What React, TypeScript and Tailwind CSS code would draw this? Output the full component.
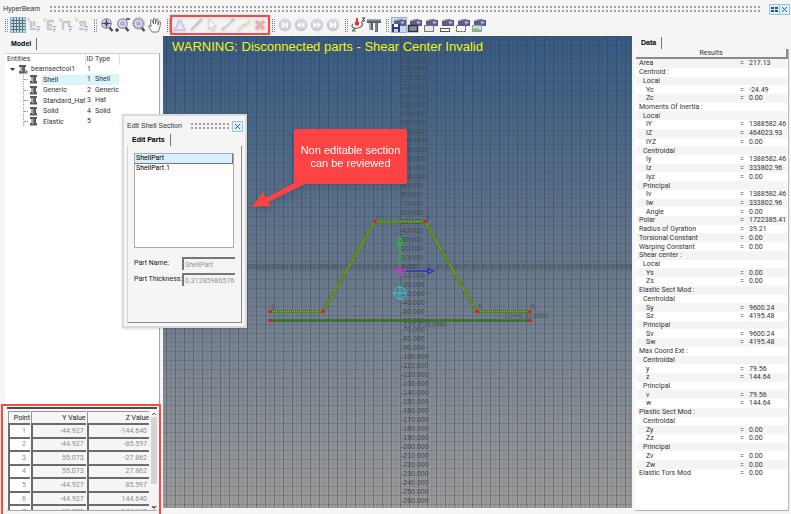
import React from "react";

const UI = "font-['Roboto','Liberation_Sans',Arial,sans-serif]";

const entities = [
  { name: "Shell", id: 1, type: "Shell", selected: true },
  { name: "Generic", id: 2, type: "Generic" },
  { name: "Standard_Hat", id: 3, type: "Hat" },
  { name: "Solid", id: 4, type: "Solid" },
  { name: "Elastic", id: 5, type: "" },
];

const points = [
  ["1", "-44.927", "-144.640"],
  ["2", "-44.927", "-85.597"],
  ["3", "55.073", "-27.862"],
  ["4", "55.073", "27.862"],
  ["5", "-44.927", "85.597"],
  ["6", "-44.927", "144.640"],
  ["7", "-55.073", "-144.640"],
];

type Result = [level: 0 | 1 | 2, label: string, value?: string];

const results: Result[] = [
  [0, "Area", "217.13"],
  [0, "Centroid :"],
  [1, "Local"],
  [2, "Yc", "-24.49"],
  [2, "Zc", "0.00"],
  [0, "Moments Of Inertia :"],
  [1, "Local"],
  [2, "IY", "1388582.46"],
  [2, "IZ", "464023.93"],
  [2, "IYZ", "0.00"],
  [1, "Centroidal"],
  [2, "Iy", "1388582.46"],
  [2, "Iz", "333802.96"],
  [2, "Iyz", "0.00"],
  [1, "Principal"],
  [2, "Iv", "1388582.46"],
  [2, "Iw", "333802.96"],
  [2, "Angle", "0.00"],
  [0, "Polar", "1722385.41"],
  [0, "Radius of Gyration", "39.21"],
  [0, "Torsional Constant", "0.00"],
  [0, "Warping Constant", "0.00"],
  [0, "Shear center :"],
  [1, "Local"],
  [2, "Ys", "0.00"],
  [2, "Zs", "0.00"],
  [0, "Elastic Sect Mod :"],
  [1, "Centroidal"],
  [2, "Sy", "9600.24"],
  [2, "Sz", "4195.48"],
  [1, "Principal"],
  [2, "Sv", "9600.24"],
  [2, "Sw", "4195.48"],
  [0, "Max Coord Ext :"],
  [1, "Centroidal"],
  [2, "y", "79.56"],
  [2, "z", "144.64"],
  [1, "Principal"],
  [2, "v", "79.56"],
  [2, "w", "144.64"],
  [0, "Plastic Sect Mod :"],
  [1, "Centroidal"],
  [2, "Zy", "0.00"],
  [2, "Zz", "0.00"],
  [1, "Principal"],
  [2, "Zv", "0.00"],
  [2, "Zw", "0.00"],
  [0, "Elastic Tors Mod", "0.00"],
];

const indent = ["pl-[3px]", "pl-[7px]", "pl-[10px]"];

function Dots({ className }: { className: string }) {
  return (
    <div
      className={`h-2 bg-[radial-gradient(circle_at_center,#a0a0a0_0,#a0a0a0_1px,transparent_1px)] bg-[length:4px_4px] ${className}`}
    />
  );
}

function Handle() {
  return (
    <svg className="h-[15px] w-[9px] shrink-0" viewBox="0 0 9 15" aria-hidden="true">
      {[1, 3, 5, 7, 9, 11, 13].map((y) => (
        <g key={y}>
          <rect x="4" y={y} width="1" height="1" fill="#6b6b6b" />
          <rect x="6" y={y} width="1" height="1" fill="#8d8d8d" />
        </g>
      ))}
    </svg>
  );
}

function Tool({ label, active, children }: { label: string; active?: boolean; children: React.ReactNode }) {
  return (
    <button
      type="button"
      aria-label={label}
      className={`flex size-4 shrink-0 items-center justify-center ${active ? "bg-[#c3dcec] outline-1 -outline-offset-1 outline-[#8fb2c8]" : ""}`}
    >
      <svg className="size-4" viewBox="0 0 16 16" fill="none">
        {children}
      </svg>
    </button>
  );
}

function AxisGlyph({ d }: { d: string }) {
  return (
    <g opacity="0.85">
      <path d="M1 1l1.500 2L4 1M2.500 3v2" stroke="#b9b9b9" />
      <path d={d} stroke="#c2c2c2" strokeWidth="2.500" />
      <path d="M10 9.500h4l-3 3h3M12 13v2" stroke="#a6aec8" />
    </g>
  );
}

function Magnifier({ children }: { children?: React.ReactNode }) {
  return (
    <>
      <path d="M10.5 10.5l3 3.5" stroke="#4c4c4c" strokeWidth="2.4" />
      <circle cx="7.5" cy="6.5" r="4.700" fill="#dfe1f0" stroke="#8a8a94" strokeWidth="1.3" />
      <circle cx="7.5" cy="6.5" r="2.5" fill="#a9afe0" />
      {children}
    </>
  );
}

function Player({ d }: { d: string }) {
  return (
    <>
      <circle cx="8" cy="8" r="6.300" fill="#cbccd8" />
      <circle cx="8" cy="7" r="4.800" fill="#d6d7e2" />
      <path d={d} fill="#ffffff" />
    </>
  );
}

function Camera({ children }: { children: React.ReactNode }) {
  return (
    <>
      <path d="M3 3.5h3V2h5v1h4v6H3z" fill="#5c5d84" />
      <path d="M3 3.5h3V2h4v1.5z" fill="#9a9cc0" />
      <circle cx="11.5" cy="5.5" r="2.6" fill="#8588c4" stroke="#454670" strokeWidth="0.7" />
      <circle cx="11.5" cy="5.5" r="0.8" fill="#dcdcf5" />
      {children}
    </>
  );
}

function Toolbar() {
  return (
    <div role="toolbar" className="flex h-[20px] items-center pb-[2px] pl-[1px]">
      <Handle />
      <Tool label="Grid" active>
        <path d="M3.5 1v14M6.5 1v14M9.5 1v14M12.5 1v14M1 3.5h14M1 6.5h14M1 9.5h14M1 12.5h14" stroke="#53727d" />
      </Tool>
      <Tool label="Local axis"><AxisGlyph d="M5 4v8h5M8 9V4" /></Tool>
      <Tool label="Flip axis"><AxisGlyph d="M12 4H6v8h4M6 8h4" /></Tool>
      <Tool label="Move axis"><AxisGlyph d="M5 13V5h6v4" /></Tool>
      <Tool label="Swap axis"><AxisGlyph d="M5 5h6v4M5 12h5M6 8h3" /></Tool>
      <Handle />
      <Tool label="Fit view">
        <Magnifier>
          <path d="M7.5 2.5v8M3.5 6.5h8" stroke="#3b3c66" strokeWidth="1.2" />
          <path d="M5.5 4.5l4 4m0-4l-4 4" stroke="#5b5d91" strokeWidth="0.6" />
        </Magnifier>
      </Tool>
      <Tool label="Zoom">
        <Magnifier>
          <path d="M11 2h4" stroke="#333" strokeWidth="1.4" />
          <path d="M0 13h4M2 11v4" stroke="#222" strokeWidth="1.2" />
        </Magnifier>
      </Tool>
      <Tool label="Zoom window">
        <Magnifier><circle cx="7.5" cy="6.5" r="6" stroke="#a5a5b0" strokeDasharray="2 1" /></Magnifier>
      </Tool>
      <Tool label="Pan">
        <path d="M5 15c-1-2-3-4-3.5-6 .5-1.200 2-.2 2.500 1L3.500 3.500c.3-1 1.500-1 1.800 0L6.500 7V2c.2-1.100 1.600-1.100 1.900 0V7l1-4.500c.4-.9 1.600-.7 1.700.2L10.800 8l1.300-3c.5-.8 1.500-.4 1.500.5-.5 3-1 6.500-2.600 9.500z" fill="#fdfdfd" stroke="#666" strokeWidth="0.9" />
      </Tool>
      <Handle />
      <div className="flex outline-2 outline-[#f04c4c] drop-shadow">
        <Tool label="Section"><path d="M7 3L3 13L13 13L8 3" stroke="#c4c4ea" strokeWidth="1.600" /><circle cx="3" cy="13" r="1" fill="#ecaebb" /></Tool>
        <Tool label="Line"><path d="M3 13L13 3" stroke="#c3c3d6" strokeWidth="1.800" /><path d="M4 12l8-8" stroke="#efacac" strokeWidth="0.800" /><circle cx="13" cy="3" r="1.200" fill="#e8b4b4" /></Tool>
        <Tool label="Select"><path d="M5 2v10l2.500-2 1.500 4 2-1-1.800-3.500H12z" fill="#fafafa" stroke="#cccccc" /></Tool>
        <Tool label="Join"><path d="M3 12l4-3 2-2 4-4" stroke="#c8c8d0" strokeWidth="1.600" /><circle cx="3" cy="12" r="1.600" fill="#c8c8e2" /><circle cx="13" cy="3" r="1.600" fill="#bdbdda" /></Tool>
        <Tool label="Split"><path d="M3 12l4-4h3l4-4" stroke="#dadacb" strokeWidth="1.600" /><circle cx="3" cy="12" r="1.600" fill="#e7e396" /><circle cx="8" cy="8" r="1.200" fill="#dcd9b0" /><circle cx="13" cy="5" r="1.500" fill="#e7e396" /></Tool>
        <Tool label="Delete"><path d="M4 4l8 8m0-8l-8 8" stroke="#e9adad" strokeWidth="3.600" /></Tool>
      </div>
      <Handle />
      <Tool label="First"><Player d="M5 5h1.500v6H5zM11 5v6L6.500 8z" /></Tool>
      <Tool label="Previous"><Player d="M7.500 5v6L4 8zM11.500 5v6L8 8z" /></Tool>
      <Tool label="Next"><Player d="M4.500 5v6L8 8zM8.500 5v6L12 8z" /></Tool>
      <Tool label="Last"><Player d="M5 5v6l4.500-3zM9.500 5H11v6H9.500z" /></Tool>
      <Handle />
      <Tool label="Orient">
        <path d="M3 7c-3 3 1 5 5 4s6-4 3-6M2 14l4-3M2 14h4" stroke="#6a6a6a" strokeWidth="1.200" />
        <path d="M7 1v6" stroke="#d33" strokeWidth="2" />
        <circle cx="7" cy="6.500" r="2.300" fill="#e23232" />
        <path d="M12 1h3l-3 3h3" stroke="#333" />
      </Tool>
      <Tool label="Sections">
        <path d="M1 2h14v4h-3v9H9V6H7v7H3.500V6H1z" fill="#5c6270" />
        <path d="M1 2h14v1.500H1zM4 6h1v7H4zM9.500 6h1v8h-1z" fill="#a5abb8" />
      </Tool>
      <Handle />
      <Tool label="Save image" active><Camera><rect x="1" y="7" width="8" height="8" fill="#353a70" /><rect x="3" y="7" width="4" height="3" fill="#fff" /><rect x="3" y="12" width="4" height="3" fill="#c9cde8" /></Camera></Tool>
      <Tool label="Capture window"><Camera><rect x="1.500" y="8.500" width="9" height="6" fill="#7e8ea3" stroke="#343434" strokeWidth="1.500" /></Camera></Tool>
      <Tool label="Capture panel"><Camera><rect x="1.500" y="8.500" width="9" height="6" fill="#e6e6e6" stroke="#777" /></Camera></Tool>
      <Tool label="Capture strip"><Camera><rect x="1.500" y="11.500" width="9" height="3" fill="#fff" stroke="#555" /></Camera></Tool>
      <Tool label="Capture area"><Camera><rect x="1.500" y="8.500" width="9" height="6" fill="#fff" stroke="#444" strokeDasharray="2 1" /></Camera></Tool>
      <Tool label="Capture picture"><Camera><rect x="1.500" y="8.500" width="9" height="6" fill="#bfe0ef" stroke="#8aa" /><path d="M2 14v-2l3-1 5 2v1z" fill="#9cc050" /></Camera></Tool>
    </div>
  );
}

function SectionIcon({ assembly }: { assembly?: boolean }) {
  return (
    <svg className="h-[9px] w-[10px] shrink-0" viewBox="0 0 10 9" aria-hidden="true">
      <path d="M1 0h7v2H7v4h1v2.500H1V6h1.500V2H1z" fill="#5a5a5a" />
      <path d="M3 2h1.500v5H3z" fill="#a5a5a5" />
      {assembly && <circle cx="8.200" cy="7" r="1.800" fill="#8b8b8b" />}
    </svg>
  );
}

function Tab({ children }: { children: React.ReactNode }) {
  return (
    <button
      type="button"
      role="tab"
      aria-selected="true"
      className="h-3 self-start border-r border-[#777] px-[5px] text-[7px] leading-[12px] font-bold text-black font-['Liberation_Sans',Arial,sans-serif]"
    >
      {children}
    </button>
  );
}

function EntityTree() {
  return (
    <div className="ml-[5px] mr-[3px] flex-1 border-t border-r border-t-[#cfcfcf] border-r-[#a5a5a5] bg-white">
      <table className={`h-[73px] w-full table-fixed border-collapse text-[7px] leading-[9px] text-[#333] ${UI}`}>
        <colgroup>
          <col className="w-[80px]" />
          <col className="w-[10px]" />
          <col className="w-[24px]" />
          <col />
        </colgroup>
        <thead>
          <tr className="h-[11px] text-left">
            <th className="border-r border-[#dcdcdc] p-0 pl-[2px] font-normal">Entities</th>
            <th className="p-0 pl-px font-normal">ID</th>
            <th className="border-r border-[#dcdcdc] p-0 font-normal">Type</th>
            <th className="p-0" />
          </tr>
        </thead>
        <tbody>
          <tr>
            <td className="p-0">
              <div className="flex items-center gap-[3px] pl-[5px]">
                <svg className="h-[3px] w-[5px]" viewBox="0 0 5 3" aria-hidden="true"><path d="M0 0h5L2.500 3z" fill="#333" /></svg>
                <SectionIcon assembly />
                beamsectcol1
              </div>
            </td>
            <td className="p-0 pl-[2px]">1</td>
            <td className="p-0" />
            <td className="p-0" />
          </tr>
          {entities.map((e) => (
            <tr key={e.name}>
              <td className="p-0">
                <div className="flex items-center pl-[18px]">
                  <span className="h-[9px] w-[5px] shrink-0 border-l border-dotted border-[#999]">
                    <span className="block h-[5px] border-b border-dotted border-[#999]" />
                  </span>
                  <span className="ml-px flex shrink-0">
                    <SectionIcon />
                  </span>
                  <span className={`ml-[2px] flex-1 pl-[2px] leading-[10px] whitespace-nowrap ${e.selected ? "bg-[#dcf4fc]" : ""}`}>{e.name}</span>
                </div>
              </td>
              <td className={`p-0 pl-[2px] ${e.selected ? "bg-[#dcf4fc]" : ""}`}>{e.id}</td>
              <td className={`p-0 ${e.selected ? "bg-[#dcf4fc]" : ""}`}>{e.type}</td>
              <td className="p-0" />
            </tr>
          ))}
        </tbody>
      </table>
    </div>
  );
}

function PointTable() {
  const cell = "border-t-2 border-l-2 border-[#6c6c6c] p-0";
  return (
    <div className="mr-[2px] ml-px flex h-[110px] flex-col border-2 border-b-0 border-[#f34a4a] pt-px pr-[2px] pl-[4px] shadow">
      <div className="h-[2px] shrink-0 bg-[#4e4e4e]" />
      <div className="flex h-[102px] overflow-hidden border-b border-[#aaa] pt-[2px]">
        <table className={`h-[107px] flex-1 table-fixed border-separate border-spacing-x-[1px] border-spacing-y-0 text-right text-[7px] leading-[10px] ${UI}`}>
          <colgroup>
            <col className="w-[22px]" />
            <col />
            <col />
          </colgroup>
          <thead>
            <tr className="h-[12px] text-[#222]">
              {["Point", "Y Value", "Z Value"].map((h) => (
                <th key={h} className="border-t border-l border-[#9a9a9a] p-0 font-normal">{h}</th>
              ))}
            </tr>
          </thead>
          <tbody className="text-[#8d8d8d]">
            {points.map(([n, y, z]) => (
              <tr key={n}>
                <td className={`${cell} bg-white pr-[4px]`}>{n}</td>
                <td className={`${cell} pr-[2px]`}>{y}</td>
                <td className={`${cell} pr-[2px]`}>{z}</td>
              </tr>
            ))}
          </tbody>
        </table>
        <div className="flex w-[7px] flex-col items-center justify-between text-[#555]">
          <svg className="h-[6px] w-[6px]" viewBox="0 0 6 6"><path d="M1 4l2-2 2 2" fill="none" stroke="currentColor" /></svg>
          <div className="mb-5 w-[6px] flex-1 bg-[#d4d4d4]" />
          <svg className="h-[6px] w-[6px]" viewBox="0 0 6 6"><path d="M1 2l2 2 2-2" fill="none" stroke="currentColor" strokeWidth="1.500" /></svg>
        </div>
      </div>
    </div>
  );
}

const steps = Array.from({ length: 52 }, (_, i) => i - 26);

function Canvas() {
  return (
    <div className="relative mb-[6px] min-w-0 flex-1 bg-linear-to-b from-[#365b84] via-[#68798d] to-[#9b9b9b]">
      <svg className="absolute inset-0 size-full" viewBox="163 36 469 472" preserveAspectRatio="xMidYMid slice">
        <defs>
          <pattern id="fine" x="400" y="270" width="4.5" height="4.5" patternUnits="userSpaceOnUse">
            <path d="M0.500 0v4.500" stroke="#303030" strokeOpacity="0.12" />
            <path d="M0 0.500h4.500" stroke="#303030" strokeOpacity="0.05" />
          </pattern>
          <pattern id="coarse" x="400" y="270" width="9" height="9" patternUnits="userSpaceOnUse">
            <path d="M0.500 0v9" stroke="#303030" strokeOpacity="0.26" />
            <path d="M0 0.500h9" stroke="#303030" strokeOpacity="0.2" strokeDasharray="2 1" />
          </pattern>
        </defs>
        <rect x="163" y="36" width="469" height="472" fill="url(#fine)" />
        <rect x="163" y="36" width="469" height="472" fill="url(#coarse)" />
        <g fill="#42474c" fontFamily="Liberation Sans, Arial, sans-serif" fontSize="7">
          {steps.map((n) => (
            <text key={`v${n}`} x="401" y={269 - n * 9}>{(n * 10).toFixed(3)}</text>
          ))}
          {steps.map((n) => (
            <text key={`h${n}`} x={400 + n * 9} y="269" fillOpacity="0.5">{(n * 10).toFixed(3)}</text>
          ))}
          <text x="505" y="318" fillOpacity="0.8">L1= 0.312860</text>
          <text x="404" y="327" fillOpacity="0.8">L1= 0.312860</text>
          <text x="271" y="309" fillOpacity="0.7">1</text>
          <text x="324" y="309" fillOpacity="0.7">2</text>
          <text x="376" y="219" fillOpacity="0.7">3</text>
          <text x="426" y="219" fillOpacity="0.7">4</text>
          <text x="478" y="309" fillOpacity="0.7">5</text>
          <text x="531" y="309" fillOpacity="0.7">6</text>
        </g>
        <path d="M270 320.500H530" stroke="#3a7029" strokeWidth="2.500" />
        <path d="M270 311.500H323L375 221.500H425L477 311.500H530" fill="none" stroke="#4a7d22" strokeWidth="3" />
        <path d="M270 311.500H323L375 221.500H425L477 311.500H530" fill="none" stroke="#8fae2c" strokeWidth="1.500" strokeDasharray="1 1" />
        <g fill="#f01414">
          {[[270, 311], [323, 311], [375, 221], [425, 221], [477, 311], [530, 311], [270, 320], [530, 320]].map(([x, y]) => (
            <circle key={`${x}-${y}`} cx={x} cy={y + 0.5} r="1.700" />
          ))}
        </g>
        <g fill="none">
          <path d="M400 270V243M397.500 243h5l-2.500-5.500z" stroke="#1fc42d" strokeWidth="1.300" />
          <path d="M401 271H428M428 268.500v5l5.500-2.500z" stroke="#2a2fc4" strokeWidth="1.300" />
          <path d="M394 271h12M400 265v12" stroke="#dc22dc" strokeWidth="1.500" />
          <path d="M393 293h14M400 286v14" stroke="#22d3dc" />
          <circle cx="400" cy="293" r="6" stroke="#22d3dc" />
        </g>
      </svg>
      <p className="relative pt-[3px] pl-[9px] text-[13px] leading-[15px] whitespace-nowrap text-[#f4f40c]">
        WARNING: Disconnected parts - Shear Center Invalid
      </p>
    </div>
  );
}

function ResultsPanel() {
  return (
    <section className="mb-[3px] ml-[3px] mr-[2px] flex w-[154px] shrink-0 flex-col">
      <div className="flex h-[13px] pt-px pl-px">
        <Tab>Data</Tab>
      </div>
      <div className="flex-1 border-r border-b border-[#b5b5b5] bg-white pl-px">
        <table className={`h-[429px] w-full table-fixed border-collapse text-[7px] leading-[8px] text-[#333] ${UI}`}>
          <colgroup>
            <col />
            <col className="w-[9px]" />
            <col className="w-[38px]" />
          </colgroup>
          <thead>
            <tr className="h-[9px]">
              <th colSpan={3} className="border-r-2 border-b-2 border-[#8a8a8a] bg-[#f5f5f5] p-0 font-normal">Results</th>
            </tr>
          </thead>
          <tbody>
            {results.map(([level, label, value], i) => (
              <tr key={i} className="odd:bg-[#f4f4f4]">
                <td className={`p-0 whitespace-nowrap ${indent[level]}`}>{label}</td>
                <td className="p-0">{value ? "=" : ""}</td>
                <td className="p-0">{value}</td>
              </tr>
            ))}
          </tbody>
        </table>
      </div>
    </section>
  );
}

function CloseButton() {
  return (
    <button type="button" aria-label="Close" className="flex size-[9px] shrink-0 items-center justify-center bg-[#d8f0f8] outline-1 outline-[#9fc4d2]">
      <svg className="size-[7px]" viewBox="0 0 7 7"><path d="M1 1l5 5M6 1L1 6" stroke="#3f5f75" /></svg>
    </button>
  );
}

function EditDialog() {
  const field = "h-[13px] w-[53px] border-t-2 border-l-2 border-t-[#777] border-l-[#777] bg-[#f3f3f3] pl-px text-[7px] leading-[9px] text-[#959595]";
  return (
    <div role="dialog" aria-label="Edit Shell Section" className={`absolute top-[114px] left-[122px] flex w-[125px] flex-col border-2 border-[#dadada] bg-[#f5f5f5] px-[3px] pt-[4px] pb-[3px] text-[7px] shadow-sm ${UI}`}>
      <div className="flex h-[12px] items-center justify-between text-[7px] leading-[10px] text-[#333] font-['Liberation_Sans',Arial,sans-serif]">
        <span>Edit Shell Section</span>
        <div className="flex items-center gap-[3px]">
          <Dots className="w-[40px]" />
          <CloseButton />
        </div>
      </div>
      <div className="flex pt-[2px]">
        <Tab>Edit Parts</Tab>
      </div>
      <div className="flex h-[177px] flex-col border-r border-b border-l border-[#8a8a8a] border-l-[#d5d5d5] px-[6px] pt-[7px]">
        <ul className="h-[95px] w-[100px] border border-[#aaa] bg-white leading-[9px] text-black">
          <li className="border-r border-b border-[#777] bg-[#d6effa] px-px">ShellPart</li>
          <li className="px-px">ShellPart.1</li>
        </ul>
        <div className="mt-[9px] flex flex-col gap-[3px] text-[#222]">
          <div className="flex items-center">
            <label htmlFor="part-name" className="w-[49px] leading-[9px]">Part Name:</label>
            <input id="part-name" className={field} defaultValue="ShellPart" readOnly />
          </div>
          <div className="flex items-center">
            <label htmlFor="part-thickness" className="w-[49px] leading-[9px] whitespace-nowrap">Part Thickness:</label>
            <input id="part-thickness" className={field} defaultValue="0.3128598657645" readOnly />
          </div>
        </div>
      </div>
    </div>
  );
}

function Callout() {
  return (
    <div className="absolute top-[129px] left-[252px] drop-shadow-md">
      <svg className="absolute top-[50px] left-0 h-[30px] w-[56px]" viewBox="0 0 56 30" aria-hidden="true">
        <path d="M0 28L11 13L14 19L44 3H55V4L16 23L19 27z" fill="#fd4343" />
      </svg>
      <div className="ml-[42px] flex h-[55px] w-[113px] items-center justify-center rounded-[2px] bg-[#fd4343] text-center text-[11px] leading-[13px] text-white">
        <p>Non editable section<br />can be reviewed</p>
      </div>
    </div>
  );
}

export default function App() {
  return (
    <div className="relative flex min-h-screen flex-col overflow-hidden bg-[#f5f5f5] font-['Liberation_Sans',Arial,sans-serif]">
      <header className="flex h-[16px] items-center gap-[9px] pt-[2px] pr-[2px] pl-[3px]">
        <h1 className="text-[7px] leading-[10px] text-[#333]">HyperBeam</h1>
        <Dots className="flex-1" />
        <div className="flex gap-px">
          <button type="button" aria-label="Dock" className="flex size-[9px] items-center justify-center bg-[#d8f0f8] outline-1 outline-[#9fc4d2]">
            <svg className="size-[7px]" viewBox="0 0 7 7"><path d="M0 1h3v2H0zM4 1h3v2H4zM0 4h3v2H0zM4 4h3v2H4z" fill="#35505f" /></svg>
          </button>
          <CloseButton />
        </div>
      </header>
      <Toolbar />
      <main className="flex flex-1">
        <section className="flex w-[163px] shrink-0 flex-col">
          <div className="flex h-[17px] pt-[2px] pl-[6px]">
            <Tab>Model</Tab>
          </div>
          <EntityTree />
          <PointTable />
        </section>
        <Canvas />
        <ResultsPanel />
      </main>
      <EditDialog />
      <Callout />
    </div>
  );
}
